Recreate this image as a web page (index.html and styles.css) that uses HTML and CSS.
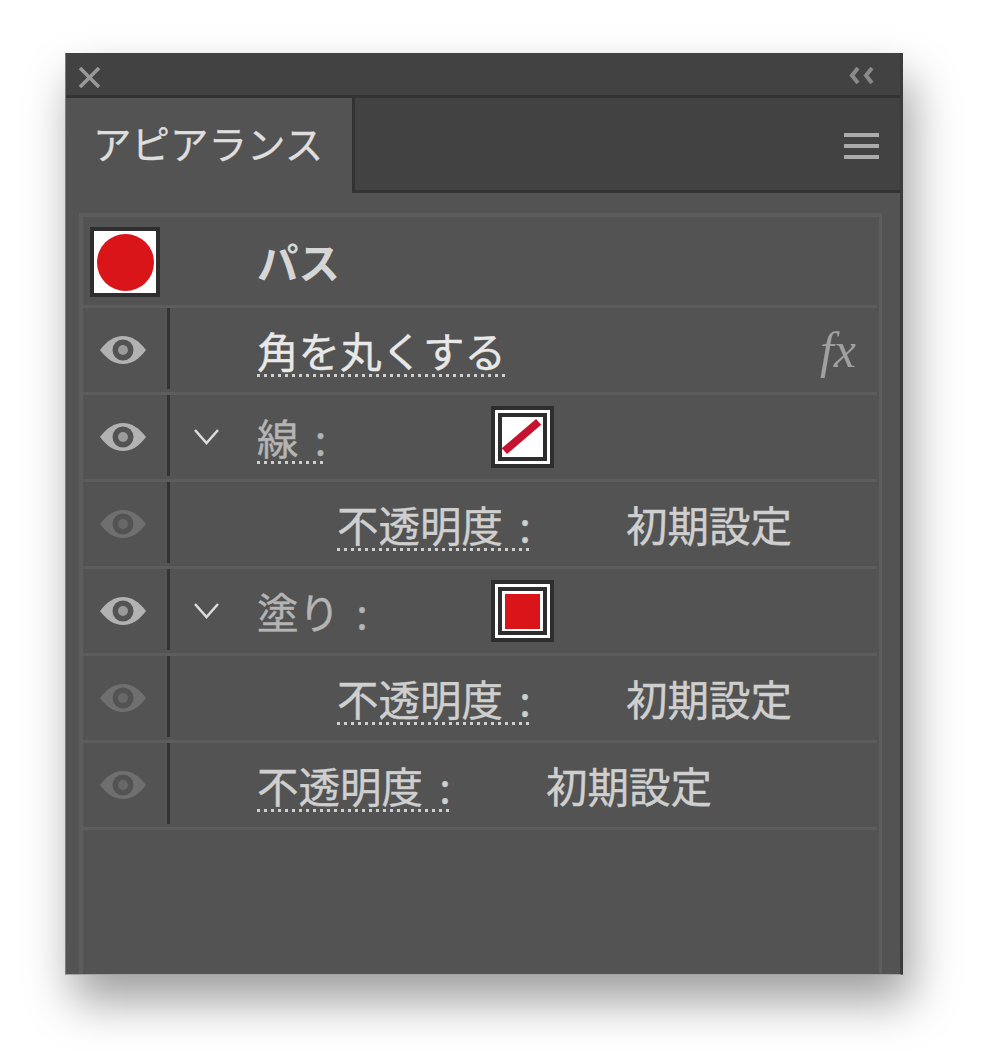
FILE: index.html
```html
<!DOCTYPE html>
<html lang="ja">
<head>
<meta charset="utf-8">
<title>アピアランス</title>
<link rel="stylesheet" href="styles.css">
</head>
<body>
<svg class="defs" width="0" height="0" aria-hidden="true">
  <defs>
    <symbol id="eye" viewBox="0 0 46 28">
      <path class="eye-shape" d="M0 14C7 5 14 0 23 0s16 5 23 14c-7 9-14 14-23 14S7 23 0 14z"/>
      <circle class="eye-hole" cx="23" cy="14" r="10.5"/>
      <circle class="eye-pupil" cx="23" cy="14" r="5"/>
    </symbol>
    <symbol id="chevron" viewBox="0 0 25 18">
      <path d="M1 2l11.500 13L24 2" fill="none" stroke="currentColor" stroke-width="2.500"/>
    </symbol>
  </defs>
</svg>
<main class="panel">
  <header class="titlebar">
    <svg class="icon-close" viewBox="0 0 21 21"><path d="M1 1l19 19M20 1L1 20"/></svg>
    <svg class="icon-collapse" viewBox="0 0 25 17"><path d="M9 1L3 8.500 9 16M23 1L17 8.500 23 16"/></svg>
  </header>
  <nav class="tabbar">
    <div class="tab">アピアランス</div>
    <div class="tab-rest"><div class="menu"><span></span><span></span><span></span></div></div>
  </nav>
  <section class="list">
    <div class="row row-head">
      <div class="thumb"><div class="thumb-dot"></div></div>
      <div class="label-col"><span class="text strong">パス</span></div>
    </div>
    <div class="row">
      <svg class="eye"><use href="#eye"/></svg>
      <div class="rule"></div>
      <div class="chev-col"></div>
      <div class="label-col"><span class="text bright dotted">角を丸くする</span></div>
      <span class="fx">fx</span>
    </div>
    <div class="row">
      <svg class="eye"><use href="#eye"/></svg>
      <div class="rule"></div>
      <div class="chev-col"><svg class="chev"><use href="#chevron"/></svg></div>
      <div class="label-col attr"><span class="text dim dotted">線 :</span></div>
      <div class="swatch"><div class="swatch-inner"><svg class="slash" viewBox="0 0 41 41"><path d="M2 35L37 5"/></svg></div></div>
    </div>
    <div class="row">
      <svg class="eye faint"><use href="#eye"/></svg>
      <div class="rule"></div>
      <div class="chev-col"></div>
      <div class="indent"></div>
      <div class="label-col opacity"><span class="text dotted">不透明度 :</span></div>
      <span class="text">初期設定</span>
    </div>
    <div class="row">
      <svg class="eye"><use href="#eye"/></svg>
      <div class="rule"></div>
      <div class="chev-col"><svg class="chev"><use href="#chevron"/></svg></div>
      <div class="label-col attr"><span class="text dim">塗り :</span></div>
      <div class="swatch"><div class="swatch-inner"><div class="fill"></div></div></div>
    </div>
    <div class="row">
      <svg class="eye faint"><use href="#eye"/></svg>
      <div class="rule"></div>
      <div class="chev-col"></div>
      <div class="indent"></div>
      <div class="label-col opacity"><span class="text dotted">不透明度 :</span></div>
      <span class="text">初期設定</span>
    </div>
    <div class="row">
      <svg class="eye faint"><use href="#eye"/></svg>
      <div class="rule"></div>
      <div class="chev-col"></div>
      <div class="label-col opacity"><span class="text dotted">不透明度 :</span></div>
      <span class="text">初期設定</span>
    </div>
  </section>
</main>
</body>
</html>
```
FILE: styles.css
```css
* { box-sizing: border-box; }
html, body { margin: 0; background: #fff; }
body { height: 1051px; padding: 53px 0 0 65px; overflow: hidden; font-family: "Noto Sans CJK JP", "Noto Sans", sans-serif; }
.defs { position: absolute; }
.panel {
  width: 838px; height: 922px; display: flex; flex-direction: column;
  background: #525352; border-right: 3px solid #3b3b3b; border-bottom: 1px solid #a3a3a3; border-left: 1px solid #7c7c7c;
  box-shadow: 8px 26px 44px rgba(0, 0, 0, .38);
}
.titlebar {
  height: 45px; flex: none; display: flex; justify-content: space-between; align-items: flex-start;
  background: #424242; border-bottom: 3px solid #333; padding: 14px 26px 0 13px;
}
.icon-close { width: 21px; height: 21px; }
.icon-close path { stroke: #999; stroke-width: 3.500; fill: none; }
.icon-collapse { width: 25px; height: 17px; }
.icon-collapse path { stroke: #8a8a8a; stroke-width: 4; fill: none; }
.tabbar { height: 95px; flex: none; display: flex; }
.tab {
  width: 286px; padding: 16px 0 0 27px; color: #dedede; font-size: 38.500px; line-height: 56px; white-space: nowrap;
  -webkit-text-stroke: .3px #dedede;
}
.tab-rest {
  flex: 1; background: #424242; border-left: 3px solid #333; border-bottom: 3px solid #333;
  display: flex; justify-content: flex-end; padding: 35px 21px 0 0;
}
.menu { width: 35px; display: flex; flex-direction: column; gap: 7px; }
.menu span { height: 4px; background: #ababab; }
.list {
  flex: 1; margin: 20px 18px 0 13px; border-top: 4px solid #5c5d5c; border-left: 4px solid #5c5d5c; border-right: 3px solid #5c5d5c;
  display: flex; flex-direction: column;
}
.row { height: 87px; flex: none; display: flex; align-items: center; border-bottom: 3px solid #5c5d5c; margin-right: 2px; }
.row-head { height: 91px; padding-left: 7px; }
.thumb { width: 70px; height: 70px; flex: none; border: 4px solid #2e2e2e; background: #fff; display: flex; align-items: center; justify-content: center; margin: 2px 98px 0 0; }
.thumb-dot { width: 57px; height: 57px; border-radius: 50%; background: #d9151a; }
.eye { width: 46px; height: 28px; flex: none; margin: 0 21px 0 17px; }
.eye-shape { fill: #b2b2b2; }
.eye-pupil { fill: #9a9a9a; }
.eye-hole { fill: #525352; }
.eye.faint { opacity: .3; }
.rule { width: 3px; flex: none; align-self: stretch; background: #333; margin-bottom: 3px; }
.chev-col { width: 88px; flex: none; padding-left: 24px; display: flex; align-items: center; }
.chev { width: 25px; height: 18px; color: #dcdcdc; margin-top: -1px; }
.indent { width: 80px; flex: none; }
.label-col { flex: none; }
.attr { width: 233px; }
.opacity { width: 289px; }
.text {
  display: inline-block; font-size: 41.500px; line-height: 53px; color: #cfcfcf; white-space: nowrap; word-spacing: 7px; margin-left: -1px;
  -webkit-text-stroke: .4px currentColor;
}
.strong { font-weight: 700; color: #d6d6d6; -webkit-text-stroke: 0; }
.bright { color: #e8e8e8; }
.dim { color: #b4b4b4; }
.dotted {
  background-image: linear-gradient(90deg, #cfcfcf 3px, transparent 3px);
  background-size: 7px 3px; background-repeat: repeat-x; background-position: left bottom;
}
.fx { margin-left: auto; margin-right: 21px; font-family: "Liberation Serif", serif; font-style: italic; font-size: 50px; line-height: 50px; color: #a0a0a0; }
.swatch { width: 63px; height: 62px; flex: none; border: 4px solid #2e2e2e; background: #fff; padding: 3px; }
.swatch-inner { width: 100%; height: 100%; border: 4px solid #2e2e2e; background: #fff; display: flex; align-items: center; justify-content: center; }
.slash { width: 41px; height: 40px; flex: none; }
.slash path { stroke: #c4122f; stroke-width: 8; fill: none; }
.fill { width: 35px; height: 35px; background: #d9151a; }
```
